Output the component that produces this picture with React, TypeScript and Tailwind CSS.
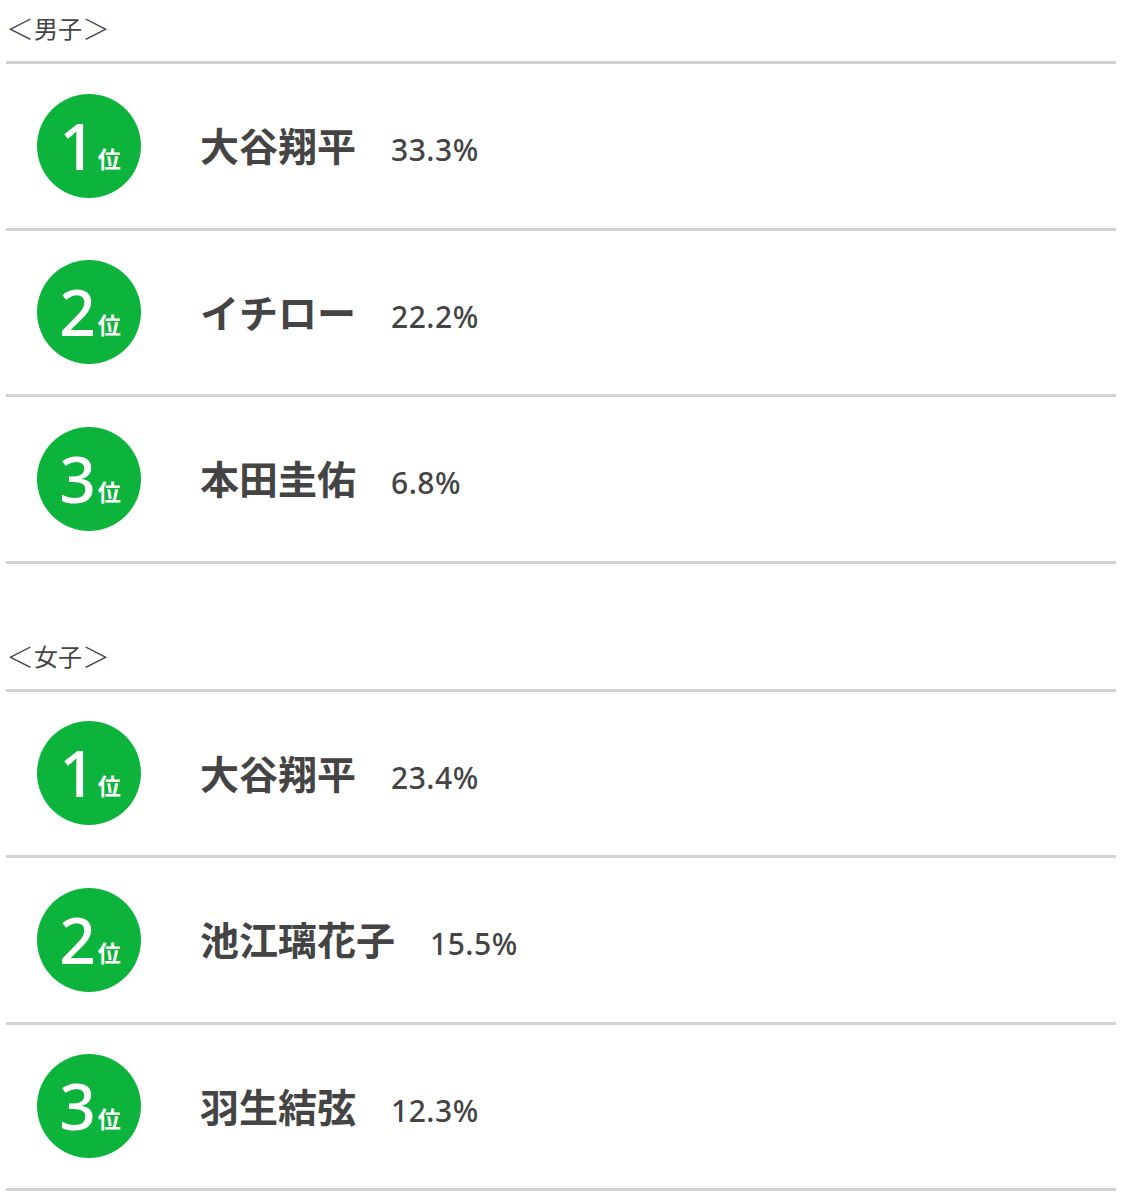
import React from 'react';

type Rank = {
  rank: number;
  name: string;
  pct: string;
};

const boys: Rank[] = [
  { rank: 1, name: '大谷翔平', pct: '33.3%' },
  { rank: 2, name: 'イチロー', pct: '22.2%' },
  { rank: 3, name: '本田圭佑', pct: '6.8%' },
];

const girls: Rank[] = [
  { rank: 1, name: '大谷翔平', pct: '23.4%' },
  { rank: 2, name: '池江璃花子', pct: '15.5%' },
  { rank: 3, name: '羽生結弦', pct: '12.3%' },
];

const jp = { fontFamily: '"Noto Sans CJK JP", "Noto Sans", sans-serif' };
const num = { fontFamily: '"Noto Sans", "Noto Sans CJK JP", sans-serif' };

const Badge = ({ rank }: { rank: number }) => (
  <div className="w-[104px] h-[104px] rounded-full bg-[#0cb43b] flex items-center justify-center shrink-0">
    <div className="flex items-baseline leading-none text-white pl-[2px]">
      <span className="text-[64px] font-medium" style={num}>{rank}</span>
      <span className="text-[23px] font-bold ml-[2px] -translate-y-[2px]" style={jp}>位</span>
    </div>
  </div>
);

const Row = ({ item }: { item: Rank }) => (
  <li className="h-[166.5px] border-b-[3px] border-[#d2d2d2] flex items-center pl-[31px]">
    <Badge rank={item.rank} />
    <div className="flex items-baseline ml-[59px] pb-[3px] text-[#444]">
      <span className="text-[39px] font-bold" style={jp}>{item.name}</span>
      <span className="text-[30px] font-medium ml-[35px] tracking-[0.5px]" style={num}>{item.pct}</span>
    </div>
  </li>
);

// 全角の括弧は1文字ずつ幅をそろえる
const Title = ({ text }: { text: string }) => (
  <h2 className="flex items-center pt-[10px] pb-[15px] h-[64px] text-[#444] font-normal border-b-[3px] border-[#d2d2d2]" style={jp}>
    {Array.from(text).map((ch, i) =>
      ch === '＜' || ch === '＞' ? (
        <span key={i} className="inline-block w-[28px] text-center text-[28px] leading-[36px] font-light">
          {ch}
        </span>
      ) : (
        <span key={i} className="inline-block w-[24px] text-center text-[24px] leading-[36px]">
          {ch}
        </span>
      )
    )}
  </h2>
);

const Section = ({ title, items }: { title: string; items: Rank[] }) => (
  <section>
    <Title text={title} />
    <ul>
      {items.map((item) => (
        <Row key={item.rank} item={item} />
      ))}
    </ul>
  </section>
);

export default function App() {
  return (
    <div className="w-[1122px] bg-white px-[6px] pb-[11px]">
      <Section title="＜男子＞" items={boys} />
      <div className="h-[64px]" />
      <Section title="＜女子＞" items={girls} />
    </div>
  );
}
